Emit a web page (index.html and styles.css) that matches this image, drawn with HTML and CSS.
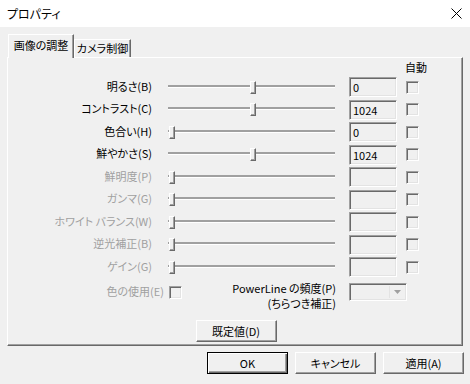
FILE: index.html
```html
<!DOCTYPE html>
<html lang="ja">
<head>
    <meta charset="UTF-8">
    <title>プロパティ</title>
    <link rel="stylesheet" href="styles.css">
</head>
<body>
<div class="titlebar">
    <span class="title">プロパティ</span>
    <svg class="close" width="11" height="11" viewBox="0 0 11 11">
        <path d="M0.5 0.5L10.5 10.5M10.5 0.5L0.5 10.5" stroke="#000" stroke-width="1"/>
    </svg>
</div>

<div class="tabs">
    <div class="tab active">画像の調整</div>
    <div class="tab">カメラ制御</div>
</div>

<div class="panel">
    <div class="auto-head">自動</div>

    <div class="row">
        <span class="label">明るさ(B)</span>
        <div class="slider"><div class="track"></div><div class="thumb" style="left: 86px"></div></div>
        <div class="edit">0</div>
        <span class="check"></span>
    </div>
    <div class="row">
        <span class="label">コントラスト(C)</span>
        <div class="slider"><div class="track"></div><div class="thumb" style="left: 86px"></div></div>
        <div class="edit">1024</div>
        <span class="check"></span>
    </div>
    <div class="row">
        <span class="label">色合い(H)</span>
        <div class="slider"><div class="track"></div><div class="thumb" style="left: 5px"></div></div>
        <div class="edit">0</div>
        <span class="check"></span>
    </div>
    <div class="row">
        <span class="label">鮮やかさ(S)</span>
        <div class="slider"><div class="track"></div><div class="thumb" style="left: 86px"></div></div>
        <div class="edit">1024</div>
        <span class="check"></span>
    </div>
    <div class="row disabled">
        <span class="label">鮮明度(P)</span>
        <div class="slider"><div class="track"></div><div class="thumb" style="left: 5px"></div></div>
        <div class="edit"></div>
        <span class="check"></span>
    </div>
    <div class="row disabled">
        <span class="label">ガンマ(G)</span>
        <div class="slider"><div class="track"></div><div class="thumb" style="left: 5px"></div></div>
        <div class="edit"></div>
        <span class="check"></span>
    </div>
    <div class="row disabled">
        <span class="label">ホワイト バランス(W)</span>
        <div class="slider"><div class="track"></div><div class="thumb" style="left: 5px"></div></div>
        <div class="edit"></div>
        <span class="check"></span>
    </div>
    <div class="row disabled">
        <span class="label">逆光補正(B)</span>
        <div class="slider"><div class="track"></div><div class="thumb" style="left: 5px"></div></div>
        <div class="edit"></div>
        <span class="check"></span>
    </div>
    <div class="row disabled">
        <span class="label">ゲイン(G)</span>
        <div class="slider"><div class="track"></div><div class="thumb" style="left: 5px"></div></div>
        <div class="edit"></div>
        <span class="check"></span>
    </div>

    <div class="extra">
        <span class="color-label">色の使用(E)</span>
        <span class="check color-check"></span>
        <span class="pl-label">PowerLine の頻度(P)<br>(ちらつき補正)</span>
        <div class="combo">
            <span class="combo-btn">
                <svg width="7" height="4" viewBox="0 0 7 4"><path d="M0 0H7L3.5 4Z" fill="#a0a0a0"/></svg>
            </span>
        </div>
    </div>

    <div class="default-row">
        <button class="btn">既定値(D)</button>
    </div>
</div>

<div class="actions">
    <button class="btn default">OK</button>
    <button class="btn">キャンセル</button>
    <button class="btn">適用(A)</button>
</div>
</body>
</html>
```

FILE: styles.css
```css
body {
    margin: 0;
    width: 470px;
    height: 384px;
    overflow: hidden;
    background-color: #f0f0f0;
    font-family: "Noto Sans CJK JP", "Noto Sans", sans-serif;
    font-size: 11px;
    font-feature-settings: "palt";
    color: #000;
}

/* title bar */
.titlebar {
    height: 27px;
    background-color: #fff;
    display: flex;
    align-items: center;
    padding: 0 8px 0 7px;
}
.title {
    font-size: 12px;
}
.close {
    margin-left: auto;
}

/* tabs */
.tabs {
    display: flex;
    align-items: flex-end;
    height: 24px;
    margin: 7px 0 -1px 8px;
    position: relative;
    z-index: 1;
}
.tab {
    box-sizing: border-box;
    width: 57px;
    height: 18px;
    margin-bottom: 1px;
    line-height: 17px;
    text-align: center;
    border-top: 1px solid #fff;
    border-left: 1px solid #fff;
    border-right: 1px solid #696969;
    box-shadow: inset -1px 0 #a0a0a0;
}
.tab.active {
    width: 66px;
    height: 24px;
    margin-bottom: 0;
    line-height: 21px;
    background-color: #f0f0f0;
}

/* panel */
.panel {
    box-sizing: border-box;
    width: 456px;
    height: 289px;
    margin-left: 7px;
    border-top: 1px solid #fff;
    border-left: 1px solid #fff;
    border-right: 1px solid #696969;
    border-bottom: 1px solid #696969;
    box-shadow: inset -1px -1px #a0a0a0;
    padding-top: 2px;
}
.auto-head {
    height: 16px;
    line-height: 15px;
    padding-left: 397px;
}

.row {
    display: flex;
    align-items: center;
    height: 22.5px;
}
.label {
    width: 144px;
    text-align: right;
    white-space: nowrap;
    margin-bottom: 3px;
}
.row.disabled .label,
.color-label {
    color: #a0a0a0;
}

.slider {
    position: relative;
    width: 175px;
    height: 13px;
    margin-left: 12px;
}
.track {
    height: 2px;
    margin: 4px 4px 0;
    background-color: #a0a0a0;
    border-bottom: 1px solid #fff;
}
.thumb {
    position: absolute;
    top: 0;
    box-sizing: border-box;
    width: 6px;
    height: 13px;
    background-color: #f0f0f0;
    border-top: 1px solid #fff;
    border-left: 1px solid #fff;
    border-right: 1px solid #696969;
    border-bottom: 1px solid #696969;
    box-shadow: inset -1px -1px #a0a0a0;
}

.edit,
.check,
.combo {
    box-sizing: border-box;
    background-color: #f0f0f0;
    border-top: 1px solid #a0a0a0;
    border-left: 1px solid #a0a0a0;
    border-right: 1px solid #fff;
    border-bottom: 1px solid #fff;
    box-shadow: inset 1px 1px #696969, inset -1px -1px #e3e3e3;
}
.edit {
    width: 48px;
    height: 20px;
    margin-left: 10px;
    padding-left: 3px;
    line-height: 18px;
}
.check {
    width: 13px;
    height: 13px;
    margin-left: 9px;
}

/* bottom controls */
.extra {
    display: flex;
    align-items: flex-start;
    height: 32px;
}
.color-label {
    width: 156px;
    text-align: right;
    line-height: 14px;
    margin-top: 5px;
}
.check.color-check {
    margin: 7px 0 0 5px;
}
.pl-label {
    width: 154px;
    text-align: right;
    line-height: 15px;
    margin-top: 2px;
}
.combo {
    width: 58px;
    height: 18px;
    margin: 4px 0 0 13px;
    display: flex;
    justify-content: flex-end;
    padding: 2px;
}
.combo-btn {
    width: 14px;
    display: flex;
    align-items: center;
    justify-content: center;
    border-left: 1px solid #e3e3e3;
}

.default-row {
    display: flex;
    justify-content: center;
    margin-top: 9px;
    padding-left: 2px;
}

/* buttons */
.btn {
    box-sizing: border-box;
    width: 81px;
    height: 22px;
    padding: 0;
    font-family: inherit;
    font-size: 11px;
    font-feature-settings: "palt";
    color: #000;
    background-color: #f0f0f0;
    border-top: 1px solid #fff;
    border-left: 1px solid #fff;
    border-right: 1px solid #696969;
    border-bottom: 1px solid #696969;
    box-shadow: inset -1px -1px #a0a0a0;
}
.btn.default {
    border: 1px solid #000;
    box-shadow: inset 1px 1px #fff, inset -1px -1px #696969, inset -2px -2px #a0a0a0;
}

.actions {
    display: flex;
    justify-content: flex-end;
    gap: 7px;
    margin-top: 6px;
    padding-right: 6px;
}
```
